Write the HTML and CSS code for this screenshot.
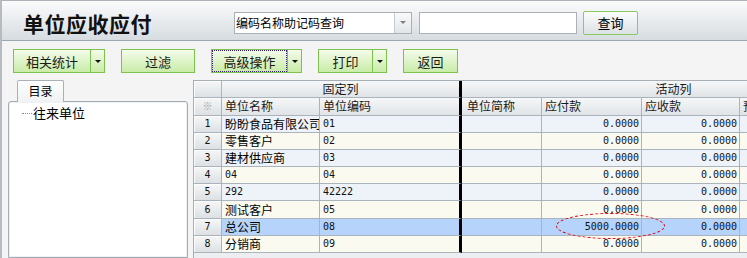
FILE: index.html
```html
<!DOCTYPE html>
<html lang="zh-CN">
<head>
<meta charset="utf-8">
<title>单位应收应付</title>
<link rel="stylesheet" href="styles.css">
</head>
<body>
<div class="app">
  <header class="topbar">
    <h1 class="title">单位应收应付</h1>
    <div class="combo">
      <span class="combo-text">编码名称助记码查询</span>
      <span class="combo-btn"><svg width="6" height="3" viewBox="0 0 6 3"><path d="M0 0H6L3 3Z" fill="#7a7f84"/></svg></span>
    </div>
    <input class="search" type="text">
    <button class="query-btn">查询</button>
  </header>

  <div class="toolbar">
    <div class="tbtn w-stat"><span class="lbl">相关统计</span><span class="drop"><svg width="6" height="3" viewBox="0 0 6 3"><path d="M0 0H6L3 3Z" fill="#111"/></svg></span></div>
    <div class="tbtn w-filter"><span class="lbl">过滤</span></div>
    <div class="tbtn w-adv focus"><span class="lbl">高级操作</span><span class="drop"><svg width="6" height="3" viewBox="0 0 6 3"><path d="M0 0H6L3 3Z" fill="#111"/></svg></span></div>
    <div class="tbtn w-print"><span class="lbl">打印</span><span class="drop"><svg width="6" height="3" viewBox="0 0 6 3"><path d="M0 0H6L3 3Z" fill="#111"/></svg></span></div>
    <div class="tbtn w-back"><span class="lbl">返回</span></div>
  </div>

  <div class="main">
    <aside class="side">
      <div class="tab">目录</div>
      <div class="tree">
        <div class="node"><span class="dots"></span>往来单位</div>
      </div>
    </aside>

    <div class="gridwrap">
      <table class="grid">
        <colgroup>
          <col class="c-rn"><col class="c-name"><col class="c-code"><col class="c-short"><col class="c-pay"><col class="c-recv"><col class="c-more">
        </colgroup>
        <thead>
          <tr class="h1"><th class="rn"></th><th colspan="2" class="grp fix-end">固定列</th><th colspan="4" class="grp">活动列</th></tr>
          <tr class="h2"><th class="rn star">※</th><th>单位名称</th><th class="fix-end">单位编码</th><th class="pl">单位简称</th><th>应付款</th><th>应收款</th><th>预收款</th></tr>
        </thead>
        <tbody>
          <tr class="ra"><td class="rn n">1</td><td>盼盼食品有限公司</td><td class="n fix-end">01</td><td></td><td class="n num">0.0000</td><td class="n num">0.0000</td><td></td></tr>
          <tr class="rb"><td class="rn n">2</td><td>零售客户</td><td class="n fix-end">02</td><td></td><td class="n num">0.0000</td><td class="n num">0.0000</td><td></td></tr>
          <tr class="ra"><td class="rn n">3</td><td>建材供应商</td><td class="n fix-end">03</td><td></td><td class="n num">0.0000</td><td class="n num">0.0000</td><td></td></tr>
          <tr class="rb"><td class="rn n">4</td><td class="n">04</td><td class="n fix-end">04</td><td></td><td class="n num">0.0000</td><td class="n num">0.0000</td><td></td></tr>
          <tr class="ra"><td class="rn n">5</td><td class="n">292</td><td class="n fix-end">42222</td><td></td><td class="n num">0.0000</td><td class="n num">0.0000</td><td></td></tr>
          <tr class="rb"><td class="rn n">6</td><td>测试客户</td><td class="n fix-end">05</td><td></td><td class="n num">0.0000</td><td class="n num">0.0000</td><td></td></tr>
          <tr class="sel"><td class="rn n">7</td><td>总公司</td><td class="n fix-end">08</td><td></td><td class="n num">5000.0000</td><td class="n num">0.0000</td><td></td></tr>
          <tr class="rb"><td class="rn n">8</td><td>分销商</td><td class="n fix-end">09</td><td></td><td class="n num">0.0000</td><td class="n num">0.0000</td><td></td></tr>
        </tbody>
      </table>
      <div class="mark"></div>
    </div>
  </div>
</div>
</body>
</html>
```

FILE: styles.css
```css
* { box-sizing: border-box; }
html, body { margin: 0; padding: 0; }
body {
  width: 747px;
  height: 258px;
  overflow: hidden;
  background: #f4f4f4;
  font-family: "Noto Sans CJK SC", "DejaVu Sans", sans-serif;
  font-size: 12px;
  color: #000;
}
.app {
  height: 258px;
  border-left: 2px solid #b5bbc1;
  display: flex;
  flex-direction: column;
}

/* top bar */
.topbar {
  height: 41px;
  flex: none;
  border-top: 1px solid #aab1b8;
  border-bottom: 1px solid #9ea7af;
  background: linear-gradient(#fbfbfc, #d6dce0);
  display: flex;
  align-items: center;
  padding: 4px 0 0 21px;
}
.title {
  margin: 0;
  width: 211px;
  font-size: 21px;
  line-height: 22px;
  font-weight: bold;
  letter-spacing: 0.5px;
  color: #111;
}
.combo {
  width: 178px;
  height: 22px;
  border: 1px solid #a9b0b6;
  background: #fff;
  display: flex;
  margin-right: 7px;
}
.combo-text {
  flex: 1;
  padding-left: 1px;
  line-height: 20px;
  font-size: 12px;
  white-space: nowrap;
}
.combo-btn {
  width: 17px;
  border-left: 1px solid #c5cace;
  background: linear-gradient(#f9fafb, #e2e5e8);
  display: flex;
  align-items: center;
  justify-content: center;
}
.search {
  width: 158px;
  height: 22px;
  border: 1px solid #a9b0b6;
  margin: 0 6px 0 0;
  padding: 0;
  background: #fff;
}
.query-btn {
  width: 55px;
  height: 24px;
  border: 1px solid #8bca5d;
  border-radius: 2px;
  background: linear-gradient(#fcfcfc, #dce1e5);
  font-family: "Noto Sans CJK SC", sans-serif;
  font-size: 13px;
  color: #000;
  padding: 0;
}

/* toolbar */
.toolbar {
  height: 39px;
  flex: none;
  display: flex;
  align-items: flex-start;
  gap: 16px;
  padding: 8px 0 0 11px;
}
.tbtn {
  height: 24px;
  display: flex;
  border: 1px solid #7cc24c;
  background: linear-gradient(#f4fbec, #c9eca7);
  font-size: 13px;
  color: #1a1a1a;
}
.tbtn .lbl {
  flex: 1;
  display: flex;
  align-items: center;
  justify-content: center;
  line-height: 1;
}
.tbtn .drop {
  width: 14px;
  border-left: 1px solid #7cc24c;
  display: flex;
  align-items: center;
  justify-content: center;
}
.w-stat { width: 92px; }
.w-filter { width: 74px; }
.w-adv { width: 91px; }
.w-print { width: 69px; }
.w-back { width: 55px; }
.focus .lbl { outline: 1px dotted #33207a; outline-offset: -1px; }

/* main */
.main {
  flex: 1;
  min-height: 0;
  display: flex;
  padding-left: 6px;
}
.side {
  width: 180px;
  flex: none;
  display: flex;
  flex-direction: column;
}
.tab {
  margin-left: 9px;
  width: 47px;
  height: 22px;
  margin-bottom: -1px;
  border: 1px solid #a9b0b7;
  border-bottom: none;
  border-radius: 2px 2px 0 0;
  background: linear-gradient(#fdfdfd, #f0f2f3);
  font-size: 12px;
  line-height: 20px;
  text-align: center;
  position: relative;
}
.tree {
  flex: 1;
  border: 1px solid #a3abb3;
  border-radius: 3px 3px 0 0;
  background: #fff;
  box-shadow: inset 0 0 0 1px #eef0f2;
  padding: 3px 0 0 13px;
}
.node {
  display: flex;
  align-items: center;
  font-size: 13px;
  line-height: 16px;
}
.dots {
  width: 10px;
  border-top: 1px dotted #8a8a8a;
  margin-right: 1px;
}

/* grid */
.gridwrap {
  flex: 1;
  min-width: 0;
  margin-left: 5px;
  position: relative;
  overflow: hidden;
  background: #eceef1;
  border-left: 1px solid #a6aeb6;
  border-top: 1px solid #a6aeb6;
}
.grid {
  border-collapse: separate;
  border-spacing: 0;
  table-layout: fixed;
  width: 692px;
}
.c-rn { width: 28px; }
.c-name { width: 98px; }
.c-code { width: 142px; }
.c-short { width: 80px; }
.c-pay { width: 100px; }
.c-recv { width: 98px; }
.c-more { width: 146px; }

.grid th, .grid td {
  border-right: 1px solid #abb4bd;
  border-bottom: 1px solid #abb4bd;
  padding: 0 3px;
  overflow: hidden;
  white-space: nowrap;
  text-align: left;
  font-weight: normal;
  font-size: 12px;
  line-height: 14px;
}
.grid th {
  background: linear-gradient(#f6f7f8, #e0e4e7);
  color: #1a1a1a;
}
.h1 { height: 17px; }
.h2 { height: 17.5px; }
.grid tbody tr { height: 17.2px; }
.grid th.grp { text-align: center; }
.grid th.pl { padding-left: 5px; }
.grid .rn {
  text-align: center;
  padding: 0;
  background: linear-gradient(#f5f6f7, #dde1e4);
  box-shadow: inset 1px 1px 0 #fbfcfc;
}
.grid th.star { color: #a0a4a8; font-size: 10px; }
.grid .fix-end { border-right: 3px solid #000; }
.ra td { background: #eef2f9; }
.rb td { background: #fbfaf1; }
.sel td { background: #b5d3fb; }
.grid td.n {
  font-family: "DejaVu Sans Mono", monospace;
  font-size: 10px;
  color: #111;
}
.grid td.num { text-align: right; padding-right: 2px; }

.mark {
  position: absolute;
  left: 362px;
  top: 132px;
  width: 109px;
  height: 26px;
  border: 1px dashed #e4000c;
  border-radius: 50%;
}
```
